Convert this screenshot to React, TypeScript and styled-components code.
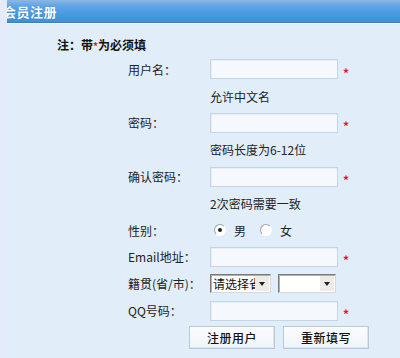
import styled, { createGlobalStyle } from 'styled-components'

const GlobalStyle = createGlobalStyle`
	html, body {
		margin: 0;
		padding: 0;
		background: #e1eef9;
	}
	body {
		font-family: "Noto Sans CJK SC", "Liberation Sans", sans-serif;
		font-size: 12px;
		color: #222;
	}
`

const Page = styled.div`
	width: 400px;
	height: 358px;
	background: #e1eef9;
	border-left: 7px solid #e6ebfb;
	box-sizing: border-box;
	position: relative;
	overflow: hidden;
`

const Header = styled.div`
	height: 22px;
	margin-left: -7px;
	background: linear-gradient(#8db7e3 0%, #62a6e6 25%, #4b9de2 55%, #3f90d6 100%);
	border-bottom: 1px solid #3b7fc0;
	box-shadow: 0 1px 0 #f2f8fe;
	display: flex;
	align-items: center;
	padding-left: 3px;
`

const Title = styled.span`
	color: #fff;
	font-weight: bold;
	font-size: 13px;
	letter-spacing: 0.5px;
	text-shadow: 0 0 1px #2f6fae;
`

const Note = styled.div`
	margin: 11px 0 0 50px;
	height: 22px;
	font-weight: bold;
	line-height: 22px;
	color: #111;
`

const Star = styled.span<{ $small?: boolean }>`
	color: #e8102c;
	font-weight: bold;
	font-size: ${p => (p.$small ? '10px' : '12px')};
	transform: ${p => (p.$small ? 'none' : 'translateY(3px)')};
	display: inline-block;
`

const Form = styled.div`
	display: grid;
	grid-template-columns: 82px auto;
	grid-auto-rows: 26.8px;
	margin-left: 121px;
`

const Label = styled.div`
	display: flex;
	align-items: center;
	color: #222;
	white-space: nowrap;
`

const Field = styled.div`
	display: flex;
	align-items: center;
	gap: 5px;
`

const Hint = styled.div`
	grid-column: 2;
	display: flex;
	align-items: center;
	color: #222;
`

const TextInput = styled.div`
	width: 126px;
	height: 18px;
	background: #f5f9fd;
	border: 1px solid #c4d5e3;
	box-shadow: inset 1px 1px 0 #e6eef5;
`

const Selects = styled.div`
	display: flex;
	align-items: center;
	gap: 7px;
`

const Select = styled.div<{ $width: number }>`
	width: ${p => p.$width}px;
	height: 17px;
	background: #fff;
	border: 1px solid #7a7a7a;
	border-right-color: #d8d8d8;
	border-bottom-color: #d8d8d8;
	box-shadow: inset 1px 1px 0 #b0b0b0;
	display: flex;
	align-items: center;
	justify-content: space-between;
	overflow: hidden;
	box-sizing: content-box;
	padding-left: 2px;
`

const SelectText = styled.span`
	white-space: nowrap;
	overflow: hidden;
	flex: 1;
	color: #111;
`

const SelectArrow = styled.span`
	width: 14px;
	height: 15px;
	margin-right: 1px;
	background: #ecebe6;
	display: flex;
	align-items: center;
	justify-content: center;
	flex-shrink: 0;
	&::after {
		content: '';
		border-left: 3px solid transparent;
		border-right: 3px solid transparent;
		border-top: 4px solid #222;
	}
`

const Radio = styled.span<{ $checked?: boolean }>`
	width: 10px;
	height: 10px;
	border-radius: 50%;
	border: 1px solid #9aa4ae;
	border-bottom-color: #fff;
	border-right-color: #fff;
	background: #fff;
	display: inline-flex;
	align-items: center;
	justify-content: center;
	&::after {
		content: '';
		width: 4px;
		height: 4px;
		border-radius: 50%;
		background: ${p => (p.$checked ? '#222' : 'transparent')};
	}
`

const RadioGroup = styled.div`
	display: flex;
	align-items: center;
	margin-left: 4px;
	gap: 8px;
`

const RadioText = styled.span`
	margin-right: 6px;
`

const Buttons = styled.div`
	grid-column: 1 / span 2;
	display: flex;
	align-items: center;
	gap: 8px;
	padding-left: 61px;
`

const Button = styled.div`
	width: 84px;
	height: 21px;
	background: linear-gradient(#fbfdff, #eef4fa);
	border: 1px solid #b7c9d9;
	box-shadow: inset -1px -1px 0 #dce6ef;
	display: flex;
	align-items: center;
	justify-content: center;
	color: #111;
	font-weight: 500;
	letter-spacing: 0.5px;
`

const fields = [
	{ label: '用户名：', hint: '允许中文名' },
	{ label: '密码：', hint: '密码长度为6-12位' },
	{ label: '确认密码：', hint: '2次密码需要一致' },
]

export default function App() {
	return (
		<>
			<GlobalStyle />
			<Page>
				<Header>
					<Title>会员注册</Title>
				</Header>
				<Note>
					注：带<Star $small>*</Star>为必须填
				</Note>
				<Form>
					{fields.map(f => (
						<>
							<Label key={f.label}>{f.label}</Label>
							<Field>
								<TextInput />
								<Star>*</Star>
							</Field>
							<Hint>{f.hint}</Hint>
						</>
					))}
					<Label>性别：</Label>
					<Field>
						<RadioGroup>
							<Radio $checked />
							<RadioText>男</RadioText>
							<Radio />
							<RadioText>女</RadioText>
						</RadioGroup>
					</Field>
					<Label>Email地址：</Label>
					<Field>
						<TextInput />
						<Star>*</Star>
					</Field>
					<Label>籍贯(省/市)：</Label>
					<Field>
						<Selects>
							<Select $width={57}>
								<SelectText>请选择省</SelectText>
								<SelectArrow />
							</Select>
							<Select $width={54}>
								<SelectText />
								<SelectArrow />
							</Select>
						</Selects>
					</Field>
					<Label>QQ号码：</Label>
					<Field>
						<TextInput />
						<Star>*</Star>
					</Field>
					<Buttons>
						<Button>注册用户</Button>
						<Button>重新填写</Button>
					</Buttons>
				</Form>
			</Page>
		</>
	)
}
